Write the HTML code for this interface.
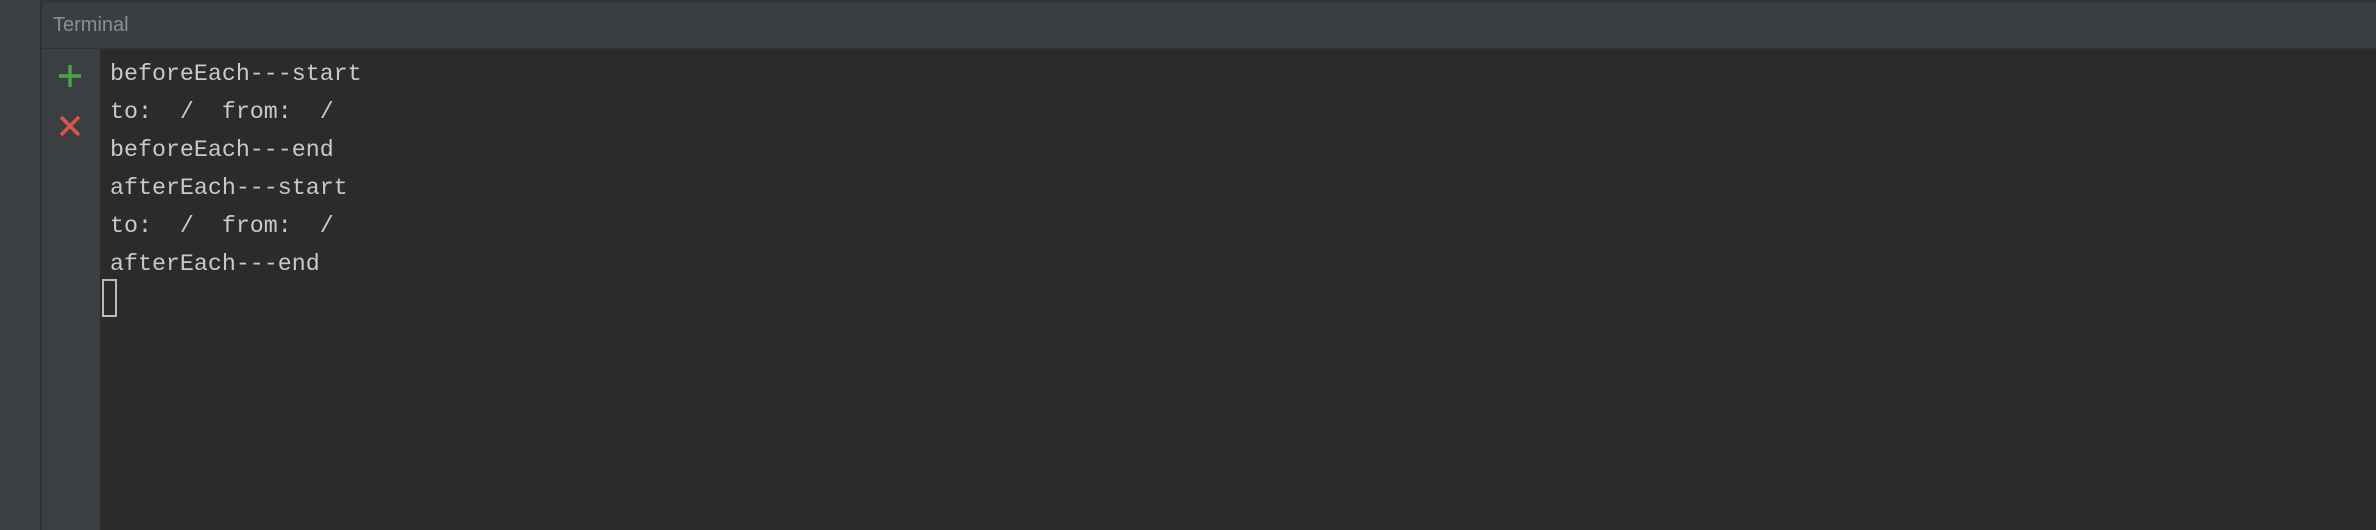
<!DOCTYPE html>
<html><head><style>
html,body{margin:0;padding:0;width:2376px;height:530px;overflow:hidden;background:#2b2b2b}
.left{position:absolute;left:0;top:0;width:40px;height:530px;background:#3c3f41}
.sep{position:absolute;left:40px;top:0;width:2px;height:530px;background:#2f3133}
.topb{position:absolute;left:42px;top:0;width:2334px;height:3px;background:#333537}
.hdr{position:absolute;left:42px;top:3px;width:2334px;height:45px;background:#3b3e40;border-bottom:1px solid #323232}
.hdr span{position:absolute;left:11px;top:11px;font:20px "Liberation Sans",sans-serif;color:#8c8f91}
.tool{position:absolute;left:42px;top:49px;width:58px;height:481px;background:#3c3f41}
.term{position:absolute;left:110px;top:55px;font:23.3px/38px "Liberation Mono",monospace;color:#c9c9c9;white-space:pre}
.cur{position:absolute;left:102px;top:279px;width:11px;height:34px;border:2px solid #bbb}
</style></head><body>
<div class="left"></div><div class="sep"></div><div class="topb"></div>
<div class="hdr"><span>Terminal</span></div>
<div class="tool">
<svg width="58" height="120" style="position:absolute;left:0;top:0">
<path d="M28 16V38M17 27H39" stroke="#4aa34a" stroke-width="3.5"/>
<path d="M19 68L37 86M37 68L19 86" stroke="#d9564a" stroke-width="3.5"/>
</svg></div>
<div class="term">beforeEach---start
to:  /  from:  /
beforeEach---end
afterEach---start
to:  /  from:  /
afterEach---end</div>
<div class="cur"></div>
</body></html>
